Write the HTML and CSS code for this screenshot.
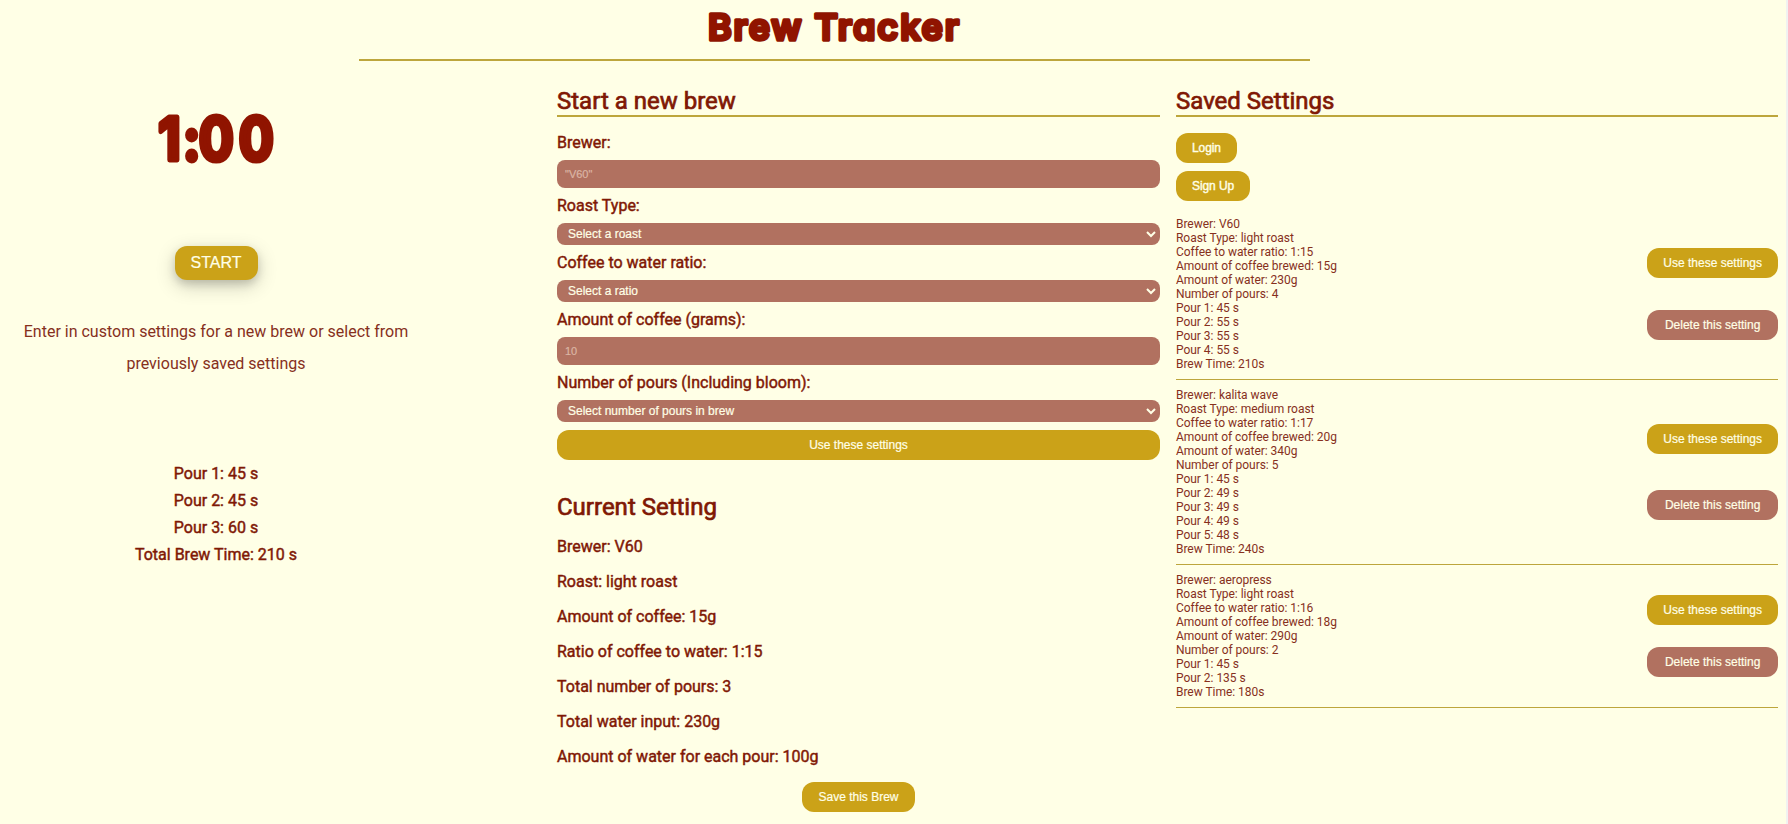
FILE: index.html
```
<!DOCTYPE html>
<html lang="en">
<head>
<meta charset="utf-8">
<title>Brew Tracker</title>
<link rel="stylesheet" href="styles.css">
</head>
<body>
<header class="header"><h1><svg class="title" width="270" height="58"><text x="8" y="40" textLength="251">Brew Tracker</text></svg></h1></header>
<main class="layout">
  <section class="timer">
    <svg class="clock" width="140" height="159"><text transform="scale(.88 1)" x="14 42 60 105.5" y="73.5">1:00</text></svg>
    <button class="btn start">START</button>
    <p class="message">Enter in custom settings for a new brew or select from previously saved settings</p>
    <ul class="pours">
      <li>Pour 1: 45 s</li>
      <li>Pour 2: 45 s</li>
      <li>Pour 3: 60 s</li>
      <li>Total Brew Time: 210 s</li>
    </ul>
  </section>
  <section class="brew">
    <h2 class="heading ruled">Start a new brew</h2>
    <form class="form">
      <label class="label" for="brewer">Brewer:</label>
      <input class="input" id="brewer" placeholder='"V60"'>
      <label class="label" for="roast">Roast Type:</label>
      <div class="field"><select class="select" id="roast"><option>Select a roast</option></select><svg class="chevron" viewBox="0 0 10 7"><path d="M1 1l4 4 4-4"/></svg></div>
      <label class="label" for="ratio">Coffee to water ratio:</label>
      <div class="field"><select class="select" id="ratio"><option>Select a ratio</option></select><svg class="chevron" viewBox="0 0 10 7"><path d="M1 1l4 4 4-4"/></svg></div>
      <label class="label" for="amount">Amount of coffee (grams):</label>
      <input class="input" id="amount" placeholder="10">
      <label class="label" for="count">Number of pours (Including bloom):</label>
      <div class="field"><select class="select" id="count"><option>Select number of pours in brew</option></select><svg class="chevron" viewBox="0 0 10 7"><path d="M1 1l4 4 4-4"/></svg></div>
      <button class="btn" type="button">Use these settings</button>
    </form>
    <h2 class="heading current-heading">Current Setting</h2>
    <div class="current">
      <p class="label">Brewer: V60</p>
      <p class="label">Roast: light roast</p>
      <p class="label">Amount of coffee: 15g</p>
      <p class="label">Ratio of coffee to water: 1:15</p>
      <p class="label">Total number of pours: 3</p>
      <p class="label">Total water input: 230g</p>
      <p class="label">Amount of water for each pour: 100g</p>
      <button class="btn save">Save this Brew</button>
    </div>
  </section>
  <section class="saved">
    <h2 class="heading ruled">Saved Settings</h2>
    <nav class="account">
      <a class="btn link">Login</a>
      <a class="btn link">Sign Up</a>
    </nav>
    <article class="setting">
      <ul class="details">
        <li>Brewer: V60</li><li>Roast Type: light roast</li><li>Coffee to water ratio: 1:15</li><li>Amount of coffee brewed: 15g</li><li>Amount of water: 230g</li><li>Number of pours: 4</li><li>Pour 1: 45 s</li><li>Pour 2: 55 s</li><li>Pour 3: 55 s</li><li>Pour 4: 55 s</li><li>Brew Time: 210s</li>
      </ul>
      <div class="actions"><button class="btn">Use these settings</button><button class="btn delete">Delete this setting</button></div>
    </article>
    <article class="setting">
      <ul class="details">
        <li>Brewer: kalita wave</li><li>Roast Type: medium roast</li><li>Coffee to water ratio: 1:17</li><li>Amount of coffee brewed: 20g</li><li>Amount of water: 340g</li><li>Number of pours: 5</li><li>Pour 1: 45 s</li><li>Pour 2: 49 s</li><li>Pour 3: 49 s</li><li>Pour 4: 49 s</li><li>Pour 5: 48 s</li><li>Brew Time: 240s</li>
      </ul>
      <div class="actions"><button class="btn">Use these settings</button><button class="btn delete">Delete this setting</button></div>
    </article>
    <article class="setting">
      <ul class="details">
        <li>Brewer: aeropress</li><li>Roast Type: light roast</li><li>Coffee to water ratio: 1:16</li><li>Amount of coffee brewed: 18g</li><li>Amount of water: 290g</li><li>Number of pours: 2</li><li>Pour 1: 45 s</li><li>Pour 2: 135 s</li><li>Brew Time: 180s</li>
      </ul>
      <div class="actions"><button class="btn">Use these settings</button><button class="btn delete">Delete this setting</button></div>
    </article>
  </section>
</main>
</body>
</html>
```
FILE: styles.css
```
* { box-sizing: border-box; margin: 0; padding: 0; }
html { background: #ffffe6; }
body {
  height: 824px;
  overflow: hidden;
  border-right: 2px solid #f1f1f1;
  background: #ffffe6;
  color: #86301d;
  font: 400 16px/19px Roboto, "Liberation Sans", sans-serif;
}
ul { list-style: none; }
.header {
  width: 951px;
  height: 61px;
  margin-left: 359px;
  border-bottom: 2px solid #bda63c;
  text-align: center;
}
.title, .clock {
  display: block;
  margin: 0 auto;
  fill: #901400;
  stroke: #901400;
  stroke-linejoin: round;
  font-family: Inter, "Liberation Sans", sans-serif;
  font-feature-settings: "cv11";
}
.title { font-size: 36px; font-weight: 600; stroke-width: 3.4px; }
.clock { flex: none; font-size: 59px; font-weight: 700; stroke-width: 5px; }
.layout {
  display: grid;
  grid-template-columns: 533px 603px 602px;
  column-gap: 16px;
  padding: 26px 8px 0;
}
.timer {
  display: flex;
  flex-direction: column;
  align-items: center;
  width: 416px;
}
.btn {
  height: 30px;
  padding: 0 16px;
  border: 0;
  border-radius: 12px;
  background: #cba218;
  color: #ffffe6;
  font: 12px/30px "Liberation Sans", sans-serif;
  white-space: nowrap;
  -webkit-text-stroke: .2px currentColor;
}
.start {
  width: 83px;
  height: 34px;
  font-size: 16px;
  line-height: 34px;
  box-shadow: 0 4px 8px rgba(0, 0, 0, .15), 0 6px 20px rgba(0, 0, 0, .19);
}
.message {
  margin-top: 36px;
  padding: 0 8px;
  line-height: 32px;
  text-align: center;
}
.pours {
  display: grid;
  gap: 8px;
  margin-top: 84px;
  text-align: center;
}
.pours, .label, .heading {
  color: #7f1805;
  -webkit-text-stroke: .45px currentColor;
}
.heading {
  font-size: 24px;
  font-weight: 400;
  line-height: 28px;
  -webkit-text-stroke-width: .7px;
}
.ruled { margin-bottom: 16px; border-bottom: 2px solid #bda63c; }
.form { display: grid; gap: 8px; }
.label { display: block; line-height: 19px; }
.input, .select {
  display: block;
  width: 100%;
  border: 0;
  border-radius: 8px;
  background: #b17160;
  color: #ffffe6;
  font-family: "Liberation Sans", sans-serif;
  -webkit-text-stroke: .2px currentColor;
}
.input { height: 28px; padding: 0 8px; font-size: 11px; }
.input::placeholder { color: #dbb5a4; opacity: 1; }
.select {
  height: 22px;
  padding: 0 11px;
  appearance: none;
  font-size: 12px;
}
.field { position: relative; }
.chevron {
  position: absolute;
  top: 8px;
  right: 4px;
  width: 10px;
  height: 7px;
  fill: none;
  stroke: #ffffe6;
  stroke-width: 2;
}
.current-heading { margin: 33px 0 16px; }
.current { display: flex; flex-direction: column; gap: 16px; }
.save { align-self: center; width: 113px; }
.account {
  display: flex;
  flex-direction: column;
  align-items: flex-start;
  gap: 8px;
  margin-bottom: 16px;
}
.link { letter-spacing: -.08px; -webkit-text-stroke-width: .4px; }
.setting {
  display: flex;
  justify-content: space-between;
  margin-bottom: 8px;
  padding-bottom: 8px;
  border-bottom: 1px solid #bda63c;
}
.details { font-size: 12px; line-height: 14px; letter-spacing: -.03px; }
.actions {
  display: flex;
  flex-direction: column;
  justify-content: space-evenly;
}
.delete { background: #b17160; }
```
